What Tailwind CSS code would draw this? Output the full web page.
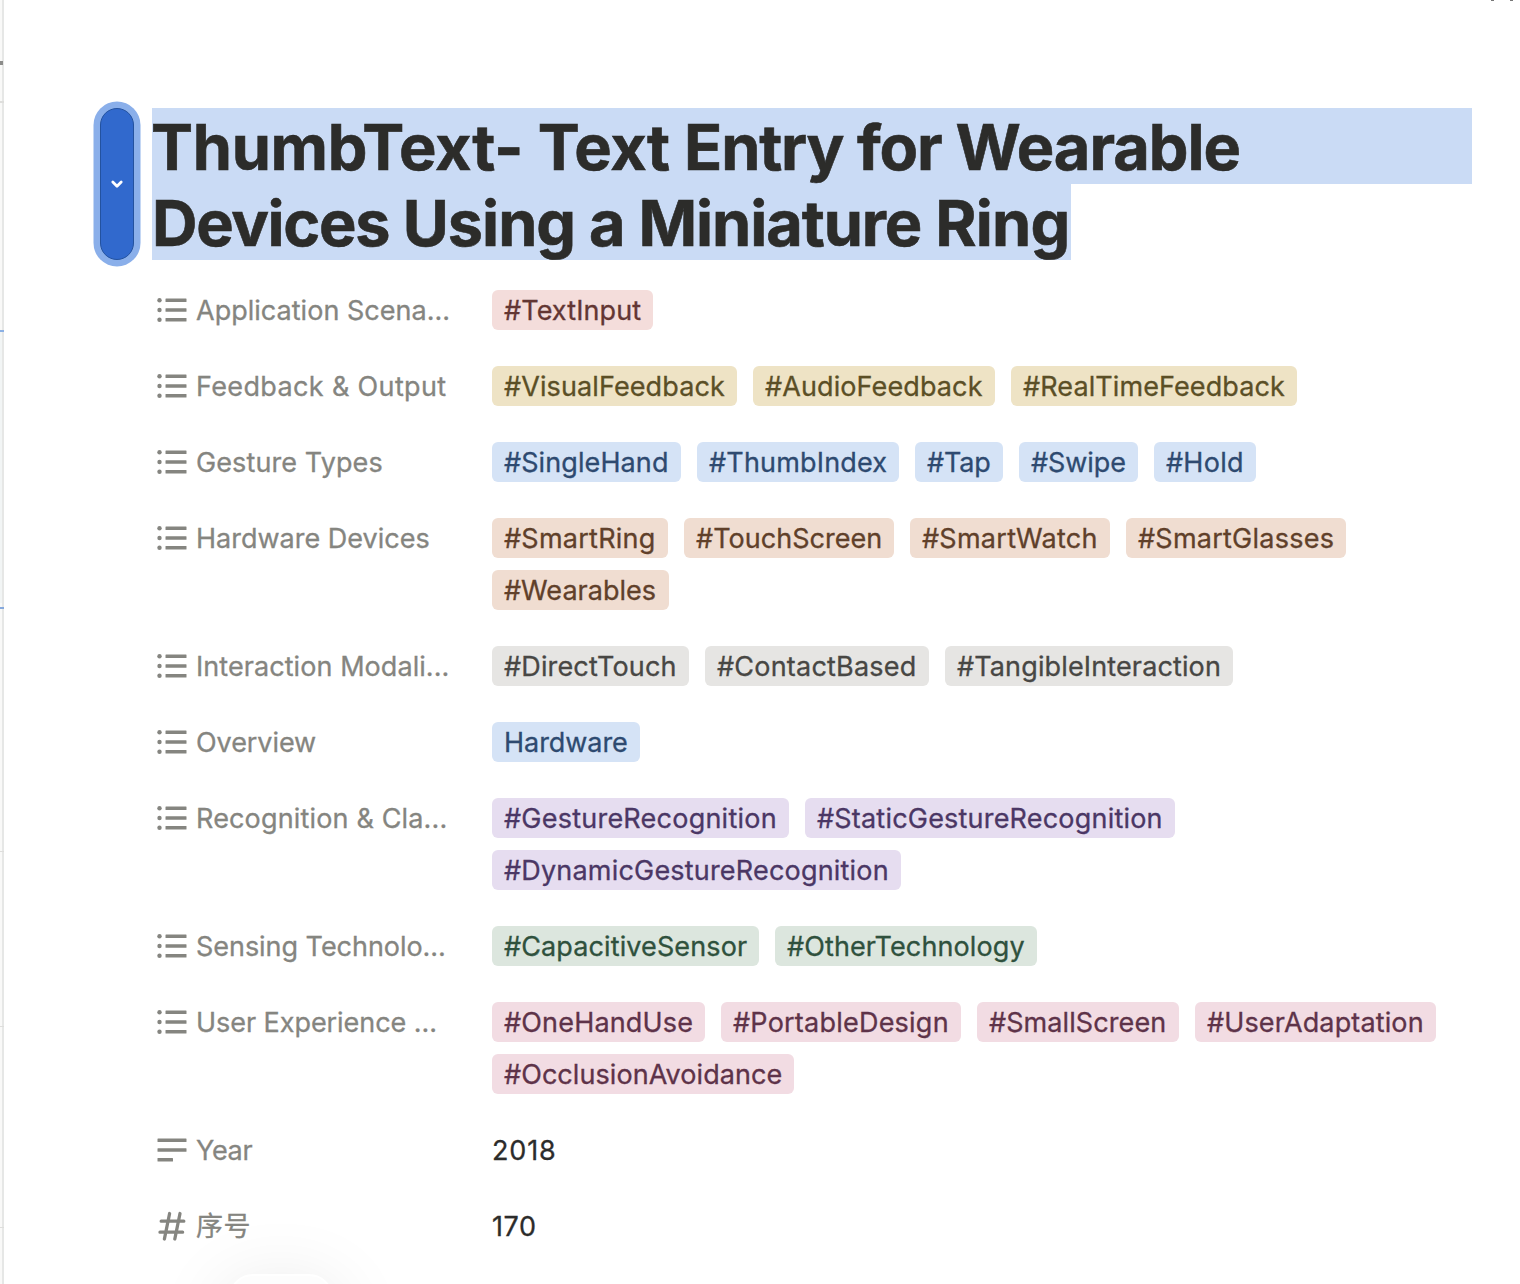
<!DOCTYPE html>
<html lang="en">
<head>
<meta charset="utf-8">
<title>ThumbText</title>
<script src="https://cdn.jsdelivr.net/npm/@tailwindcss/browser@4"></script>
</head>
<body class="bg-white">
<svg class="hidden">
  <symbol id="list" viewBox="0 0 30 24"><g fill="currentColor"><circle cx="2.5" cy="2.2" r="2.2"/><circle cx="2.5" cy="12" r="2.2"/><circle cx="2.5" cy="21.8" r="2.2"/><rect x="8.5" y="0.5" width="21" height="3.4" rx=".5"/><rect x="8.5" y="10.3" width="21" height="3.4" rx=".5"/><rect x="8.5" y="20.1" width="21" height="3.4" rx=".5"/></g></symbol>
</svg>
<div class="relative flex h-[1284px] w-[1520px] overflow-hidden bg-white font-['Inter','Noto_Sans_CJK_SC',sans-serif]">
  <aside class="relative w-1 shrink-0 border-r-2 border-[#e6e7e6] bg-[#f9f9f8]">
    <i class="absolute left-0 top-[61px] h-1 w-[3px] bg-[#8c8c8a]"></i>
    <i class="absolute left-0 top-[101px] h-0.5 w-1 bg-[#dededc]"></i>
    <i class="absolute left-0 top-[330px] h-[2px] w-1 bg-[#8bb0e4]"></i>
    <i class="absolute left-0 top-[332px] h-[271px] w-0.5 bg-[#f2f5f5]"></i>
    <i class="absolute left-0 top-[607px] h-[2px] w-1 bg-[#86a9dd]"></i>
    <i class="absolute left-0 top-[851px] h-px w-1 bg-[#dededc]"></i>
    <i class="absolute left-0 top-[1026px] h-px w-1 bg-[#dededc]"></i>
    <i class="absolute left-0 top-[1227px] h-px w-1 bg-[#dededc]"></i>
  </aside>
  <i class="absolute left-[1491px] top-0 h-px w-[3px] bg-[#777]"></i>
  <i class="absolute left-[1510px] top-0 h-px w-[3px] bg-[#777]"></i>
  <main class="flex-1 pt-[108px]">
    <header class="flex pl-24">
      <button class="flex h-[152px] w-[34px] items-center justify-center rounded-full border border-[#23529f] bg-[#3169cd] ring-[6.5px] ring-[#8aafea]">
        <svg class="h-3 w-4" viewBox="0 0 16 12" fill="none" stroke="#fff" stroke-width="2.8" stroke-linecap="round" stroke-linejoin="round"><path d="M3.8 4 8 8.2 12.2 4"/></svg>
      </button>
      <h1 class="ml-[18px] w-[1320px] text-[63px] leading-[78px] font-bold whitespace-nowrap text-[#2c2c2a] [-webkit-text-stroke:0.6px]">
        <span class="block h-[76px] bg-[#cadbf5] -indent-px"><span class="tracking-[-0.3px]">ThumbText- </span><span class="tracking-[-0.5px]">Text </span><span class="tracking-[-1.2px]">Entry </span><span class="tracking-[-1.1px]">for </span><span class="tracking-[-1px]">Wearable</span></span>
        <span class="block h-[76px] w-[919px] bg-[#cadbf5]"><span class="tracking-[-1.35px]">Devices </span><span class="tracking-[-1.03px]">Using a </span><span class="tracking-[-1.08px]">Miniature </span><span class="tracking-[-0.75px]">Ring</span></span>
      </h1>
    </header>
    <dl id="rows" class="mt-4 flex flex-col gap-2 pl-[153px] text-[27px] leading-10 text-[#2c2c2b] [-webkit-text-stroke:0.3px]"></dl>
  </main>
  <div class="absolute left-[229px] top-[1274px] h-20 w-[104px] rounded-[24px] border-2 border-white bg-[#fdfdfd] shadow-[0_16px_80px_rgba(0,0,0,0.12)]"></div>
</div>
<script>
const listIcon = '<svg class="h-6 w-[30px] shrink-0"><use href="#list"/></svg>';
const textIcon = '<svg class="h-6 w-[30px] shrink-0" viewBox="0 0 30 24" fill="currentColor"><rect x=".5" y=".5" width="29" height="3.4" rx=".5"/><rect x=".5" y="10.3" width="29" height="3.4" rx=".5"/><rect x=".5" y="20.1" width="15.5" height="3.4" rx=".5"/></svg>';
const hashIcon = '<svg class="h-[30px] w-[30px] shrink-0" viewBox="0 0 30 30" fill="none" stroke="currentColor" stroke-width="3.3" stroke-linecap="round"><path d="M12.6 2.5 7.4 28M23 2.5 17.8 28M4.2 10.2H26.8M3 21.2H25.6"/></svg>';
const colors = {
  red: 'bg-[#f4dddb] text-[#633633]', yellow: 'bg-[#eee3c5] text-[#5b4f26]', blue: 'bg-[#d5e3f6] text-[#2e4a70]',
  orange: 'bg-[#f0ddd1] text-[#60402a]', gray: 'bg-[#e6e5e3] text-[#484744]', purple: 'bg-[#e6ddf0] text-[#4b3765]',
  green: 'bg-[#dce6de] text-[#2f513d]', pink: 'bg-[#f2dce3] text-[#5e3349]'
};
const rows = [
  ['Application Scena...', 254, 9, 'red', [['#TextInput', 161, 4]]],
  ['Feedback & Output', 251, 3, 'yellow', [['#VisualFeedback', 245, 6.5], ['#AudioFeedback', 242, 6.5], ['#RealTimeFeedback', 286, 8]]],
  ['Gesture Types', 187, 5.5, 'blue', [['#SingleHand', 189, 5], ['#ThumbIndex', 202, 4.5], ['#Tap', 88, 3], ['#Swipe', 119, 4], ['#Hold', 102, 1.5]]],
  ['Hardware Devices', 234, 8.5, 'orange', [['#SmartRing', 176, 3], ['#TouchScreen', 210, 6.5], ['#SmartWatch', 200, 3.5], ['#SmartGlasses', 220, 4], ['#Wearables', 177, 5.5]]],
  ['Interaction Modali...', 253, 8, 'gray', [['#DirectTouch', 197, 4.5], ['#ContactBased', 224, 4.5], ['#TangibleInteraction', 288, 7]]],
  ['Overview', 120, 5, 'blue', [['Hardware', 148, 5]]],
  ['Recognition & Cla...', 251, 6, 'purple', [['#GestureRecognition', 297, 5.5], ['#StaticGestureRecognition', 370, 7.5], ['#DynamicGestureRecognition', 409, 9]]],
  ['Sensing Technolo...', 249, 10, 'green', [['#CapacitiveSensor', 267, 7], ['#OtherTechnology', 262, 7]]],
  ['User Experience ...', 240, 10, 'pink', [['#OneHandUse', 213, 5], ['#PortableDesign', 240, 4.5], ['#SmallScreen', 202, 5.5], ['#UserAdaptation', 241, 6], ['#OcclusionAvoidance', 302, 9]]],
  ['Year', 57, 3.5, '', [['2018', 64, -1]], textIcon],
  ['序号', 54, 1, '', [['170', 45, 0]], hashIcon]
];
const tracking = (text, width, tight) => `letter-spacing:${(((width + tight) / 28 - tight) / text.length).toFixed(3)}px`;
document.getElementById('rows').innerHTML = rows.map(([label, width, tight, color, values, icon]) => `
  <div class="flex items-start py-3.5">
    <dt class="flex h-10 w-[335px] shrink-0 items-center gap-[9px] whitespace-nowrap text-[#858580]">${icon || listIcon}<span class="pt-0.5" style="${tracking(label, width, tight)}">${label.replace('&', '&amp;')}</span></dt>
    <dd class="flex w-[960px] flex-wrap gap-x-4 gap-y-3">${values.map(([v, w, t]) =>
      `<span class="h-10 pt-px whitespace-nowrap ${color ? 'rounded-md px-3 ' + colors[color] : ''}" style="width:${w}px;${tracking(v, color ? w - 24 : w, t)}">${v}</span>`).join('')}</dd>
  </div>`).join('');
</script>
</body>
</html>
